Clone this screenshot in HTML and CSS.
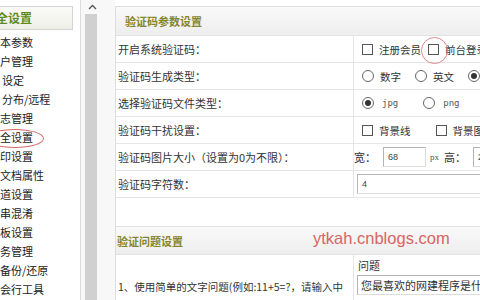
FILE: index.html
```html
<!DOCTYPE html>
<html lang="zh-CN">
<head>
<meta charset="utf-8">
<link rel="stylesheet" href="styles.css">
</head>
<body>
<div class="page">
  <aside class="side">
    <div class="side-head"><span class="cut">安全设置</span></div>
    <ul class="side-list">
      <li>本参数</li>
      <li>户管理</li>
      <li class="ind">设定</li>
      <li class="ind">分布/远程</li>
      <li>志管理</li>
      <li class="current">全设置<span class="mark-ellipse"></span></li>
      <li>印设置</li>
      <li>文档属性</li>
      <li>道设置</li>
      <li>串混淆</li>
      <li>板设置</li>
      <li>务管理</li>
      <li>备份/还原</li>
      <li>会行工具</li>
    </ul>
  </aside>
  <div class="scroll">
    <div class="thumb"></div>
    <svg class="arrow" width="9" height="6" viewBox="0 0 9 6"><path d="M1 5 L4.5 1.5 L8 5" fill="none" stroke="#555" stroke-width="1.3"/></svg>
  </div>
  <main class="panel">
    <div class="sec-head">验证码参数设置</div>
    <div class="row">
      <div class="lab">开启系统验证码：</div>
      <div class="val">
        <span class="cb"></span><span class="opt">注册会员</span>
        <span class="cb cb2"><span class="mark-circle"></span></span><span class="opt">前台登录</span>
      </div>
    </div>
    <div class="row">
      <div class="lab">验证码生成类型：</div>
      <div class="val">
        <span class="rd"></span><span class="opt">数字</span>
        <span class="rd rd2"></span><span class="opt">英文</span>
        <span class="rd rd2 on"></span>
      </div>
    </div>
    <div class="row">
      <div class="lab">选择验证码文件类型：</div>
      <div class="val">
        <span class="rd on"></span><span class="opt mono">jpg</span>
        <span class="rd rd3"></span><span class="opt mono">png</span>
      </div>
    </div>
    <div class="row">
      <div class="lab">验证码干扰设置：</div>
      <div class="val">
        <span class="cb"></span><span class="opt">背景线</span>
        <span class="cb cb3"></span><span class="opt">背景图片</span>
      </div>
    </div>
    <div class="row">
      <div class="lab">验证码图片大小（设置为0为不限）：</div>
      <div class="val tight size">
        <span class="txt">宽：</span><span class="inp small">68</span><span class="px">px</span><span class="txt">高：</span><span class="inp small">24</span>
      </div>
    </div>
    <div class="row">
      <div class="lab">验证码字符数：</div>
      <div class="val tight">
        <span class="inp wide">4</span>
      </div>
    </div>
    <div class="blank"></div>
    <div class="sec-head sec2">验证问题设置</div>
    <div class="qrow">
      <div class="lab qlab">1、使用简单的文字问题(例如:11+5=?，请输入中</div>
      <div class="qval">
        <div class="qtitle">问题</div>
        <span class="inp qinp">您最喜欢的网建程序是什么？</span>
      </div>
    </div>
  </main>
  <div class="watermark">ytkah.cnblogs.com</div>
</div>
</body>
</html>
```
FILE: styles.css
```css
html, body {
  margin: 0;
  padding: 0;
  width: 480px;
  height: 300px;
  overflow: hidden;
  background: #fff;
}
.page {
  position: relative;
  display: flex;
  height: 300px;
  font-family: "Noto Sans CJK SC", "Noto Sans", sans-serif;
  font-size: 11px;
  color: #333;
}
.side {
  flex: none;
  border-right: 1px solid #dcdcdc;
  padding-top: 6px;
  box-sizing: border-box;
  width: 81px;
}
.side-head {
  width: 73px;
  height: 24px;
  box-sizing: border-box;
  border: 1px solid #d4d4d4;
  border-left: none;
  background: linear-gradient(#fbfbf7, #eef0e8);
  color: #5f8a22;
  font-weight: bold;
  font-size: 12px;
  line-height: 22px;
  overflow: hidden;
  white-space: nowrap;
}
.cut {
  display: inline-block;
  margin-left: -16px;
}
.side-list {
  list-style: none;
  margin: 3px 0 0;
  padding: 0;
}
.side-list li {
  position: relative;
  height: 19px;
  line-height: 19px;
  white-space: nowrap;
  color: #222;
}
.side-list li.ind { padding-left: 2px; }
.mark-ellipse {
  position: absolute;
  left: -14px;
  top: 1px;
  width: 56px;
  height: 17px;
  border: 1px solid #d86a6a;
  border-radius: 50%;
}
.scroll {
  position: relative;
  width: 34px;
  flex: none;
  background: #f8f8f8;
}
.thumb {
  position: absolute;
  left: 4px;
  top: 14px;
  bottom: 0;
  width: 12px;
  background: #d0d0d0;
}
.arrow {
  position: absolute;
  left: 7px;
  top: 4px;
}
.panel {
  margin-top: 6px;
  width: 420px;
  flex: none;
  border: 1px solid #dedede;
  border-right: none;
  border-bottom: none;
  background: #fff;
}
.sec-head {
  height: 29px;
  box-sizing: border-box;
  border-bottom: 1px solid #e3e3e3;
  background: linear-gradient(#f9f9f9, #eeeeee);
  color: #86862c;
  font-weight: bold;
  font-size: 11px;
  line-height: 28px;
  padding-left: 9px;
}
.sec2 {
  border-top: 1px solid #e3e3e3;
  padding-left: 1px;
}
.row {
  display: flex;
  height: 27px;
  box-sizing: border-box;
  border-bottom: 1px solid #e6e6e6;
}
.lab {
  width: 238px;
  flex: none;
  box-sizing: border-box;
  border-right: 1px solid #e6e6e6;
  padding-left: 2px;
  line-height: 26px;
  white-space: nowrap;
}
.val {
  display: flex;
  align-items: center;
  padding-left: 8px;
  white-space: nowrap;
}
.val.tight { padding-left: 2px; }
.val.size { padding-left: 0; }
.cb {
  position: relative;
  width: 11px;
  height: 11px;
  flex: none;
  box-sizing: border-box;
  border: 1px solid #555;
  background: #fff;
}
.cb2 { margin-left: 7px; }
.cb3 { margin-left: 25px; }
.mark-circle {
  position: absolute;
  left: -8px;
  top: -8px;
  width: 25px;
  height: 25px;
  border: 1px solid #d88a8a;
  border-radius: 50%;
}
.rd {
  position: relative;
  width: 12px;
  height: 12px;
  flex: none;
  box-sizing: border-box;
  border: 1px solid #666;
  border-radius: 50%;
  background: #fff;
}
.rd.on::after {
  content: "";
  position: absolute;
  left: 2px;
  top: 2px;
  width: 6px;
  height: 6px;
  border-radius: 50%;
  background: #333;
}
.rd2 { margin-left: 14px; }
.rd3 { margin-left: 25px; }
.opt {
  margin-left: 6px;
  font-size: 10.5px;
}
.mono {
  font-family: "DejaVu Sans Mono", monospace;
  font-size: 9px;
  color: #555;
  margin-left: 8px;
}
.txt { font-size: 11px; }
.px {
  font-family: "Liberation Serif", serif;
  font-size: 9px;
  color: #555;
  margin: 0 5px 0 4px;
}
.inp {
  display: inline-block;
  height: 20px;
  box-sizing: border-box;
  border: 1px solid #b4b4b4;
  border-right-color: #ddd;
  border-bottom-color: #ddd;
  background: #fff;
  font-family: "Liberation Sans", sans-serif;
  font-size: 9px;
  line-height: 18px;
  padding-left: 4px;
  color: #444;
}
.small { width: 43px; margin-left: 7px; }
.wide { width: 240px; margin-left: 1px; }
.blank { height: 28px; }
.qrow {
  display: flex;
  height: 60px;
}
.qlab {
  line-height: normal;
  padding-top: 24px;
  font-size: 10.5px;
}
.qval {
  padding: 3px 0 0 3px;
}
.qtitle {
  height: 17px;
  line-height: 14px;
  padding-left: 1px;
}
.qinp {
  width: 240px;
  font-family: "Noto Sans CJK SC", sans-serif;
  font-size: 11px;
  color: #333;
  padding-left: 3px;
}
.watermark {
  position: absolute;
  left: 313px;
  top: 229px;
  font-family: "Liberation Sans", sans-serif;
  font-size: 16.5px;
  color: #d86565;
  white-space: nowrap;
}
```
